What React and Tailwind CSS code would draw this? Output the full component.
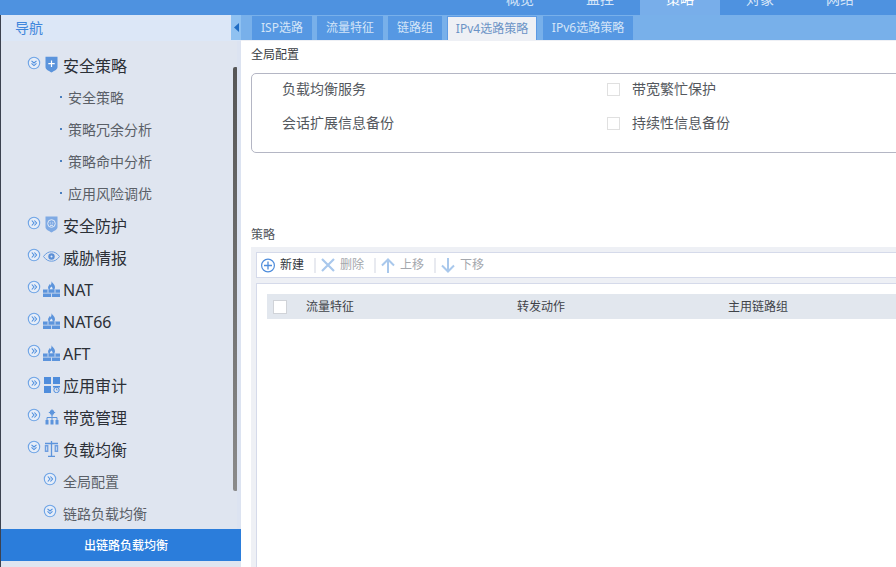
import React from 'react'

const font = { fontFamily: '"Noto Sans", "Noto Sans CJK SC", sans-serif' }

const topItems = ['概览', '监控', '策略', '对象', '网络']
const tabs = [
  { label: 'ISP选路', w: 'w-[60px]' },
  { label: '流量特征', w: 'w-[66px]' },
  { label: '链路组', w: 'w-[54px]' },
  { label: 'IPv4选路策略', w: 'w-[90px]', active: true },
  { label: 'IPv6选路策略', w: 'w-[90px]' },
]

function Toggle({ open }) {
  return (
    <svg width="14" height="14" viewBox="0 0 14 14" fill="none" className="shrink-0">
      <circle cx="7" cy="7" r="5.7" stroke="#6ea4e6" strokeWidth="1.1" fill="#e6edf8" />
      {open ? (
        <path d="M4.5 4.8 7 7l2.5-2.2M4.5 7.4 7 9.6l2.5-2.2" stroke="#4f8fde" strokeWidth="1.1" />
      ) : (
        <path d="M4.8 4.5 7 7 4.8 9.5M7.4 4.5 9.6 7 7.4 9.5" stroke="#4f8fde" strokeWidth="1.1" />
      )}
    </svg>
  )
}

function ShieldPlus() {
  return (
    <svg width="13" height="17" viewBox="0 0 13 17">
      <path d="M.5.8h12v10.200c0 2.500-3.500 4-6 5.500C4 15 .5 13.500.5 11z" fill="#5b94dc" />
      <path d="M6.500 4.500v6.500M3.300 7.700h6.400" stroke="#fff" strokeWidth="1.200" />
    </svg>
  )
}

function ShieldFace() {
  return (
    <svg width="13" height="17" viewBox="0 0 13 17">
      <path d="M.5.500h12v10.500c0 2.500-3.500 4-6 5.500C4 15 .5 13.500.5 11z" fill="#7faae4" />
      <circle cx="6.500" cy="7.500" r="3.800" fill="none" stroke="#e3ebf7" strokeWidth="1" />
      <path d="M4.800 7h1M7.200 7h1M5 9.300h3" stroke="#e3ebf7" strokeWidth="1" />
    </svg>
  )
}

function Eye() {
  return (
    <svg width="17" height="11" viewBox="0 0 17 11" fill="none">
      <path d="M.5 5.500C3 2 5.500.8 8.500.8s5.500 1.200 8 4.700c-2.500 3.500-5 4.700-8 4.700S3 9 .5 5.500z" stroke="#6a9de0" strokeWidth="1" />
      <circle cx="8.500" cy="5.500" r="3.200" fill="#5b8fd6" />
      <circle cx="8.500" cy="5.500" r="1" fill="#e3ebf7" />
    </svg>
  )
}

function Firewall() {
  return (
    <svg width="17" height="16" viewBox="0 0 17 16">
      <path d="M8.500 0c.5 2 3.500 3.200 3.500 6.200 0 1-.4 1.800-.8 2.500H5.800c-.6-.9-.9-1.800-.6-3 .3-1.100 1.100-1.400 1.500-2.700.5.300.9.800 1 1.400C8.300 3.200 8.700 1.500 8.500 0z" fill="#5c94dc" />
      <path d="M7 8.500c-.5-1 .5-1.800 1.500-3 .7 1.200 1.500 2 1 3z" fill="#e3ebf7" />
      <path d="M0 8.500h17v3.200H0zM0 12.500h17V16H0z" fill="#5c94dc" />
      <path d="M5 8.500v3.200M12 8.500v3.200M8.500 12.500V16" stroke="#e3ebf7" strokeWidth=".8" />
    </svg>
  )
}

function Apps() {
  return (
    <svg width="16" height="16" viewBox="0 0 16 16">
      <path d="M0 0h7v7H0zM9 0h7v7H9zM0 9h7v7H0z" fill="#4f8ddc" />
      <path d="M9 9h7v1.500H9z" fill="#4f8ddc" />
      <circle cx="12.500" cy="13" r="2.700" fill="none" stroke="#4f8ddc" strokeWidth="1" />
      <path d="M12.500 11.500V13h1.200" stroke="#4f8ddc" strokeWidth=".8" fill="none" />
    </svg>
  )
}

function Org() {
  return (
    <svg width="14" height="16" viewBox="0 0 14 16" fill="none">
      <circle cx="7" cy="3.500" r="2.400" fill="#5c94dc" />
      <path d="M7 .3v6.400M3.800 3.500h6.400" stroke="#5c94dc" strokeWidth="1" />
      <path d="M7 6v5M2 11V8.500h10V11" stroke="#5c94dc" strokeWidth="1" />
      <path d="M.5 11h3v4.500h-3zM5.500 11h3v4.500h-3zM10.500 11h3v4.500h-3z" fill="#5c94dc" />
    </svg>
  )
}

function Scale() {
  return (
    <svg width="15" height="16" viewBox="0 0 15 16" fill="none">
      <path d="M7.500 0v15M1 2.500h13M4 15.300h7" stroke="#5c94dc" strokeWidth="1.300" />
      <path d="M.8 4h3.600v7H.8zM10.600 4h3.600v7h-3.600z" fill="#6f9fe0" />
      <path d="M2.600 5.500v4M12.400 5.500v4" stroke="#e3ebf7" strokeWidth=".8" />
    </svg>
  )
}

function Group({ icon, label, open }) {
  return (
    <div className="h-8 flex items-center pl-[26px]">
      <div className="-mt-[6px]"><Toggle open={open} /></div>
      <div className="w-[21px] flex justify-center shrink-0 mb-[3px]">{icon}</div>
      <span className="ml-[1px] text-[16px] text-[#2c3037]">{label}</span>
    </div>
  )
}

function Leaf({ label }) {
  return (
    <div className="h-8 flex items-center pl-[59px]">
      <span className="w-[2px] h-[2px] bg-[#4a7fc0] shrink-0 mb-[2px]" />
      <span className="ml-[6px] -mt-[2px] text-[14px] text-[#5a5f67]">{label}</span>
    </div>
  )
}

function Sub({ label, open }) {
  return (
    <div className="h-8 flex items-center pl-[42px]">
      <div className="-mt-[6px]"><Toggle open={open} /></div>
      <span className="ml-[6px] -mt-[2px] text-[14px] text-[#5a5f67]">{label}</span>
    </div>
  )
}

function Sidebar() {
  return (
    <aside className="relative w-[241px] shrink-0 bg-[#dfe5f0] border-l border-[#3c4250] flex flex-col overflow-hidden">
      <div className="h-[26px] shrink-0 bg-[#dce7f7] flex items-center pl-[14px] justify-between">
        <span className="text-[14px] text-[#3f86dc] -mt-[2px]">导航</span>
        <div className="w-[10px] h-[25px] self-start bg-[#8fc1f1] flex items-center justify-center">
          <svg width="5" height="9" viewBox="0 0 5 9"><path d="M5 0v9L0 4.500z" fill="#1f6cc4" /></svg>
        </div>
      </div>
      <div className="pt-[9px] flex flex-col">
        <Group icon={<ShieldPlus />} label="安全策略" open />
        <Leaf label="安全策略" />
        <Leaf label="策略冗余分析" />
        <Leaf label="策略命中分析" />
        <Leaf label="应用风险调优" />
        <Group icon={<ShieldFace />} label="安全防护" />
        <Group icon={<Eye />} label="威胁情报" />
        <Group icon={<Firewall />} label="NAT" />
        <Group icon={<Firewall />} label="NAT66" />
        <Group icon={<Firewall />} label="AFT" />
        <Group icon={<Apps />} label="应用审计" />
        <Group icon={<Org />} label="带宽管理" />
        <Group icon={<Scale />} label="负载均衡" open />
        <Sub label="全局配置" />
        <Sub label="链路负载均衡" open />
        <div className="h-8 -mt-[1px] pt-[1px] bg-[#2b7ddb] text-white text-[12px] font-medium flex items-center justify-center pl-[10px]">
          出链路负载均衡
        </div>
      </div>
      {/* scrollbar thumb and track lie over the list */}
      <div className="absolute left-[232px] top-[52px] w-[5px] h-[424px] rounded-[2px] bg-gradient-to-b from-[#565656] to-[#8b8b8b]" />
      <div className="absolute left-[236px] top-[26px] w-[4px] h-[488px] bg-[#dce3f1]" />
    </aside>
  )
}

function Check() {
  return <span className="block w-[13px] h-[13px] border border-[#e0e0e0] bg-white" />
}

function Divider() {
  return <span className="w-[2px] h-[15px] bg-[#e8eaf0] ml-[10px] mr-[5px]" />
}

function ToolBtn({ icon, label, muted }) {
  return (
    <div className="flex items-center gap-[5px]">
      {icon}
      <span className={`text-[12px] ${muted ? 'text-[#a4a7ad]' : 'text-[#33373d]'}`}>{label}</span>
    </div>
  )
}

function Toolbar() {
  return (
    <div className="h-[26px] bg-white border border-[#d5daea] flex items-center pl-[4px]">
      <ToolBtn
        label="新建"
        icon={
          <svg width="14" height="15" viewBox="0 0 14 15" fill="none">
            <circle cx="7" cy="7.500" r="6.400" stroke="#4f8ddc" strokeWidth="1.200" />
            <path d="M7 3.500v8M3 7.500h8" stroke="#4f8ddc" strokeWidth="1.300" />
          </svg>
        }
      />
      <Divider />
      <ToolBtn
        muted
        label="删除"
        icon={
          <svg width="14" height="14" viewBox="0 0 14 14" fill="none">
            <path d="M1 1l12 12M13 1 1 13" stroke="#a9c8ec" strokeWidth="2.200" />
          </svg>
        }
      />
      <Divider />
      <ToolBtn
        muted
        label="上移"
        icon={
          <svg width="14" height="15" viewBox="0 0 14 15" fill="none">
            <path d="M7 15V1.500M1 7.500l6-6 6 6" stroke="#a9c8ec" strokeWidth="2" />
          </svg>
        }
      />
      <Divider />
      <ToolBtn
        muted
        label="下移"
        icon={
          <svg width="14" height="15" viewBox="0 0 14 15" fill="none">
            <path d="M7 0v13.500M1 7.500l6 6 6-6" stroke="#a9c8ec" strokeWidth="2" />
          </svg>
        }
      />
    </div>
  )
}

export default function App() {
  return (
    <div className="w-[896px] h-[567px] overflow-hidden bg-white flex flex-col" style={font}>
      {/* top navigation, cropped by the screenshot */}
      <header className="h-[15px] shrink-0 bg-[#4e92e0] flex justify-end pr-[16px] overflow-hidden">
        {topItems.map((item) => (
          <div
            key={item}
            className={`w-[80px] h-[15px] text-center text-[14px] leading-[14px] ${item === '策略' ? 'bg-[#78aeea] text-white' : 'text-[#d6e6f8]'}`}
          >
            <span className="block -mt-[8px]">{item}</span>
          </div>
        ))}
      </header>

      <div className="flex-1 flex min-h-0">
        <Sidebar />
        <main className="flex-1 min-w-0 overflow-hidden flex flex-col">
          <div className="h-[26px] shrink-0 bg-[#78b0ea] border-b border-[#eef0f5] flex items-end pl-[11px]">
            {tabs.map((tab) => (
              <div
                key={tab.label}
                className={`${tab.w} h-[24px] flex items-center justify-center text-[12px] ${tab.active ? 'bg-[#eef0f5] text-[#6b93c6] border border-b-0 border-[#5c9ae4] mr-[6px]' : 'bg-[#5698e3] text-[#d4e5f8] mr-[5px]'}`}
              >
                {tab.label}
              </div>
            ))}
          </div>

          <div className="flex-1 pl-[10px] w-[720px]">
            <div className="h-[28px] mb-[4px] flex items-center text-[12px] text-[#3a3e44]">全局配置</div>
            <section className="h-[80px] border border-[#b4b6c4] rounded-[5px] pl-[30px] flex flex-col gap-[4px]">
              <div className="h-[30px] flex items-center">
                <span className="w-[325px] -mt-[2px] text-[14px] text-[#54585e]">负载均衡服务</span>
                <Check />
                <span className="ml-[12px] -mt-[2px] text-[14px] text-[#54585e]">带宽繁忙保护</span>
              </div>
              <div className="h-[30px] flex items-center">
                <span className="w-[325px] -mt-[2px] text-[14px] text-[#54585e]">会话扩展信息备份</span>
                <Check />
                <span className="ml-[12px] -mt-[2px] text-[14px] text-[#54585e]">持续性信息备份</span>
              </div>
            </section>

            <div className="mt-[73px] h-[17px] flex items-center text-[12px] text-[#50545a]">策略</div>
            <section className="mt-[4px] bg-[#eef0f5] pl-[5px] pt-[5px] h-[320px]">
              <Toolbar />
              <div className="mt-[5px] h-[300px] bg-white border border-[#d5daea] pl-[10px] pt-[10px]">
                <div className="h-[25px] bg-[#e2e7ee] flex items-center pl-[6px] text-[12px] text-[#3f4349]">
                  <span className="block w-[14px] h-[14px] border border-[#d0d3d8] bg-white shrink-0" />
                  <span className="ml-[19px] w-[211px]">流量特征</span>
                  <span className="w-[211px]">转发动作</span>
                  <span>主用链路组</span>
                </div>
              </div>
            </section>
          </div>
        </main>
      </div>
    </div>
  )
}
